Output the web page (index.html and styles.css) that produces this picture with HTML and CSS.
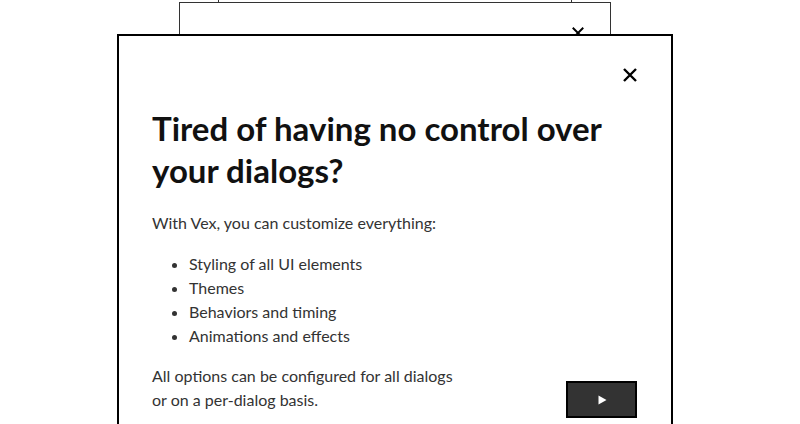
FILE: index.html
```html
<!DOCTYPE html>
<html>
<head>
<meta charset="utf-8">
<link rel="stylesheet" href="styles.css">
</head>
<body>
<div class="stage">
  <div class="dialog dialog-back2"></div>
  <div class="dialog dialog-back1">
    <span class="close close-back">
      <svg viewBox="0 0 16 16" width="14" height="14"><path d="M2 2L14 14M14 2L2 14" stroke="#000" stroke-width="2.2" fill="none"/></svg>
    </span>
  </div>
  <div class="dialog dialog-front">
    <span class="close close-front">
      <svg viewBox="0 0 16 16" width="16" height="16"><path d="M2 2L14 14M14 2L2 14" stroke="#000" stroke-width="2.4" fill="none"/></svg>
    </span>
    <h1 class="title">Tired of having no control over your dialogs?</h1>
    <p class="text">With Vex, you can customize everything:</p>
    <ul class="list">
      <li>Styling of all UI elements</li>
      <li>Themes</li>
      <li>Behaviors and timing</li>
      <li>Animations and effects</li>
    </ul>
    <div class="footer">
      <p class="text">All options can be configured for all dialogs<br>or on a per-dialog basis.</p>
      <button class="next"><svg viewBox="0 0 10 10" width="10" height="10"><path d="M1.5 0.5L9.5 5L1.5 9.5Z" fill="#fff"/></svg></button>
    </div>
  </div>
</div>
</body>
</html>
```
FILE: styles.css
```css
html, body {
  margin: 0;
  padding: 0;
  background: #fff;
}
.stage {
  position: relative;
  width: 800px;
  height: 424px;
  overflow: hidden;
  font-family: "Lato", "Open Sans", sans-serif;
}
.dialog {
  position: absolute;
  background: #fff;
  box-sizing: border-box;
}
.dialog-back2 {
  left: 218px;
  top: -100px;
  width: 354px;
  height: 103px;
  border: 1.5px solid #333;
}
.dialog-back1 {
  left: 179px;
  top: 2px;
  width: 432px;
  height: 200px;
  border: 1.5px solid #333;
}
.dialog-front {
  left: 117px;
  top: 34px;
  width: 556px;
  height: 420px;
  border: 2px solid #000;
  padding: 71px 33px 0 33px;
}
.close {
  position: absolute;
  display: block;
  line-height: 0;
}
.close-back {
  right: 25px;
  top: 23px;
}
.close-front {
  right: 33px;
  top: 31px;
}
.title {
  margin: 0;
  font-size: 33px;
  line-height: 42px;
  font-weight: 700;
  color: #111;
}
.text {
  margin: 0;
  font-size: 16px;
  line-height: 24px;
  color: #333;
}
.dialog-front > .text {
  margin-top: 20px;
}
.list {
  margin: 17px 0 16px 0;
  padding: 0 0 0 37px;
  font-size: 16px;
  line-height: 24px;
  color: #333;
}
.footer {
  display: flex;
  justify-content: space-between;
  align-items: flex-start;
}
.next {
  margin-top: 17px;
  margin-right: 1px;
  width: 71px;
  height: 37px;
  background: #333;
  border: 2px solid #000;
  padding: 0;
  display: flex;
  align-items: center;
  justify-content: center;
}
```
